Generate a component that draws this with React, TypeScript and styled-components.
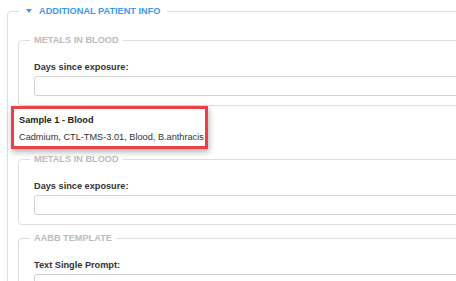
import React from 'react';
import styled, { createGlobalStyle } from 'styled-components';

const GlobalStyle = createGlobalStyle`
  html, body {
    margin: 0;
    padding: 0;
    background: #ffffff;
    overflow: hidden;
  }
  body {
    font-family: 'Liberation Sans', Arial, sans-serif;
    font-size: 9.2px;
    color: #333333;
  }
`;

const Page = styled.div`
  width: 456px;
  height: 281px;
  overflow: hidden;
  padding: 5px 0 0 7px;
  box-sizing: border-box;
`;

const Section = styled.fieldset`
  width: 540px;
  margin: 0;
  padding: 17px 0 0 10px;
  border: 1px solid #dddddd;
  border-radius: 4px;
  display: flex;
  flex-direction: column;
`;

const SectionLegend = styled.legend`
  margin-left: 1px;
  padding: 0 7px;
  line-height: 12px;
  font-size: 9.2px;
  font-weight: bold;
  color: #3b9af0;
  text-transform: uppercase;
  display: flex;
  align-items: center;
  gap: 7px;
`;

const Caret = styled.span`
  width: 0;
  height: 0;
  border-left: 3.5px solid transparent;
  border-right: 3.5px solid transparent;
  border-top: 4px solid #3b9af0;
`;

const Group = styled.fieldset`
  margin: 0 0 7px;
  padding: 15px 0 9px 15px;
  border: 1px solid #dddddd;
  border-radius: 4px;
`;

const GroupLegend = styled.legend`
  margin-left: -4px;
  padding: 0 4px;
  line-height: 12px;
  font-size: 9.2px;
  font-weight: bold;
  color: #bcbcbc;
  text-transform: uppercase;
`;

const Label = styled.label`
  display: block;
  line-height: 12px;
  font-weight: bold;
  color: #333333;
  margin-bottom: 3px;
`;

const Input = styled.input`
  display: block;
  width: 560px;
  height: 20px;
  box-sizing: border-box;
  border: 1px solid #d2d2d2;
  border-radius: 3px;
  background: #ffffff;
  outline: none;
`;

const SampleCard = styled.div`
  width: 197px;
  box-sizing: border-box;
  margin: -7px 0 4px -7px;
  padding: 5px 5px 3px;
  border: 3px solid #ec3f48;
  background: #ffffff;
  box-shadow: 1px 3px 6px rgba(0, 0, 0, 0.3);
`;

const SampleTitle = styled.div`
  line-height: 13px;
  font-weight: bold;
  color: #222222;
  margin-bottom: 4px;
`;

const SampleDetails = styled.div`
  line-height: 12px;
  color: #333333;
  white-space: nowrap;
`;

const Field: React.FC<{ title: string; label: string }> = ({ title, label }) => (
  <Group>
    <GroupLegend>{title}</GroupLegend>
    <Label>{label}</Label>
    <Input type="text" />
  </Group>
);

const App: React.FC = () => {
  return (
    <>
      <GlobalStyle />
      <Page>
        <Section>
          <SectionLegend>
            <Caret />
            Additional Patient Info
          </SectionLegend>
          <Field title="Metals in Blood" label="Days since exposure:" />
          <SampleCard>
            <SampleTitle>Sample 1 - Blood</SampleTitle>
            <SampleDetails>Cadmium, CTL-TMS-3.01, Blood, B.anthracis</SampleDetails>
          </SampleCard>
          <Field title="Metals in Blood" label="Days since exposure:" />
          <Field title="AABB Template" label="Text Single Prompt:" />
        </Section>
      </Page>
    </>
  );
};

export default App;
